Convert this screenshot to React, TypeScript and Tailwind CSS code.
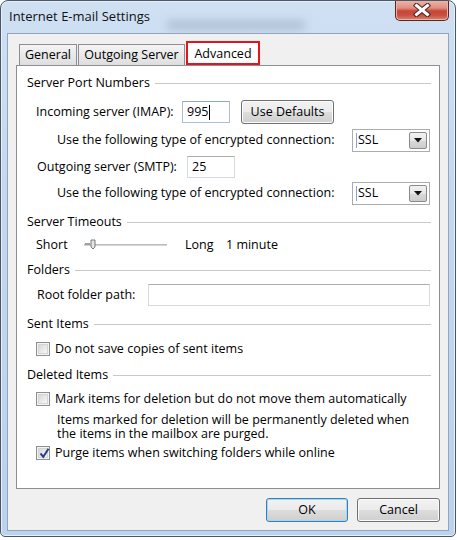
import React from "react";

function GroupHeader({ title, className = "" }: { title: string; className?: string }) {
  return (
    <div className={`flex items-center h-[14px] pl-[10px] ${className}`}>
      <span className="whitespace-nowrap">{title}</span>
      <div className="flex-1 ml-[5px] h-0 border-t border-[#c8c8c8]" />
    </div>
  );
}

function TextBox({ value, width, focused = false, caret = false }: { value: string; width: string; focused?: boolean; caret?: boolean }) {
  return (
    <div
      className={`${width} h-[22px] bg-white flex items-center pl-[4px] border ${
        focused
          ? "border-[#a9bfd8] border-t-[#8fa8c6]"
          : "border-[#d6d9df] border-t-[#abadb3]"
      }`}
    >
      <span>{value}</span>
      {caret && <span className="w-px h-[15px] bg-black ml-[1px]" />}
    </div>
  );
}

function Select({ value }: { value: string }) {
  return (
    <div className="w-[78px] h-[23px] bg-white border border-[#acacac] flex items-center pl-[3px] pr-[2px]">
      <span className="w-px h-[15px] bg-[#7aa7d8] mr-[1px]" />
      <span className="flex-1">{value}</span>
      <div className="w-[18px] h-[17px] border border-[#8a8a8a] rounded-[2px] bg-[linear-gradient(to_bottom,#f2f2f2_0%,#e6e6e6_50%,#d8d8d8_51%,#cdcdcd_100%)] flex items-center justify-center">
        <svg width="8" height="5" viewBox="0 0 8 5">
          <path d="M0 0 L8 0 L4 4.5 Z" fill="#111" />
        </svg>
      </div>
    </div>
  );
}

function CheckBox({ checked = false }: { checked?: boolean }) {
  return (
    <div className="w-[14px] h-[14px] border border-[#8e8f8f] bg-[#f4f4f4] p-[1px] shrink-0">
      <div className="relative w-full h-full border border-[#d4d4d4] bg-[linear-gradient(135deg,#d6d8db_0%,#ebebeb_60%,#f7f7f7_100%)]">
        {checked && (
          <svg className="absolute left-[0px] top-[-1px]" width="11" height="11" viewBox="0 0 11 11">
            <path d="M1.5 5.5 L4.3 8.8 L9.5 0.8" fill="none" stroke="#2a3f7e" strokeWidth="2" />
          </svg>
        )}
      </div>
    </div>
  );
}

function Button({ label, width, isDefault = false }: { label: string; width: string; isDefault?: boolean }) {
  return (
    <div
      className={`${width} h-[24px] rounded-[3px] border flex items-center justify-center bg-[linear-gradient(to_bottom,#f2f2f2_0%,#ebebeb_48%,#dddddd_50%,#cfcfcf_100%)] ${
        isDefault
          ? "border-[#3c7fb1] shadow-[inset_0_0_0_1px_#9fd9f6]"
          : "border-[#707070] shadow-[inset_0_0_0_1px_#fbfbfb]"
      }`}
    >
      {label}
    </div>
  );
}

function Slider() {
  return (
    <svg width="83" height="16" viewBox="0 0 83 16">
      <rect x="0" y="7" width="83" height="2" fill="#d4d4d4" />
      <rect x="0" y="7" width="83" height="1" fill="#bdbdbd" />
      <rect x="1" y="6" width="5" height="2" fill="#a0a0a0" />
      <path d="M7 3 L11 3 L11 10 L9 12 L7 10 Z" fill="#e6e6e6" stroke="#7b7b7b" strokeWidth="1" />
    </svg>
  );
}

function CloseButton() {
  return (
    <div className="w-[54px] h-[21px] mr-[6px] mt-[-1px] rounded-b-[5px] border border-[#5a2620] border-t-0 bg-[linear-gradient(to_bottom,#ecb8ab_0%,#df8f7f_40%,#c5473a_55%,#c94e40_75%,#d98372_100%)] shadow-[inset_0_0_0_1px_#efb3a6] flex items-center justify-center">
      <svg width="18" height="14" viewBox="0 0 18 14">
        <path d="M3.5 2.5 L14.5 11.5 M14.5 2.5 L3.5 11.5" stroke="#4b2320" strokeWidth="5" strokeLinecap="square" />
        <path d="M3.5 2.5 L14.5 11.5 M14.5 2.5 L3.5 11.5" stroke="#ffffff" strokeWidth="3" strokeLinecap="square" />
      </svg>
    </div>
  );
}

export default function App() {
  return (
    <div className="w-[457px] h-[540px] bg-white font-['Open_Sans',sans-serif] text-[12.5px] leading-none text-black">
      <div className="relative w-[456px] h-[537px] rounded-t-[8px] rounded-b-[5px] border border-[#4b5667] bg-[linear-gradient(to_bottom,#cfe0f3_0%,#c3d7ef_40%,#bcd2ed_100%)] shadow-[inset_0_0_0_1px_#e6eff9] flex flex-col overflow-hidden">
        <div className="absolute left-[165px] top-[19px] w-[140px] h-[10px] rounded-full bg-[#8797ab] opacity-40 blur-[4px]" />
        {/* Title bar */}
        <div className="relative h-[32px] flex items-start justify-between">
          <div className="h-[31px] flex items-center pl-[8px] text-[13px] text-[#111]">Internet E-mail Settings</div>
          <CloseButton />
        </div>
        {/* Client */}
        <div className="relative mx-[6px] h-[498px] border border-[#8fa5c2] bg-[#f0f0f0] flex flex-col">
          {/* Tabs */}
          <div className="h-[24px] mt-[7px] pl-[11px] flex items-end gap-[1px]">
            <div className="w-[58px] h-[21px] border border-b-0 border-[#8c8e94] bg-[linear-gradient(to_bottom,#f4f4f4_0%,#e9e9e9_50%,#dedede_100%)] flex items-center justify-center">
              General
            </div>
            <div className="w-[107px] h-[21px] border border-b-0 border-[#8c8e94] bg-[linear-gradient(to_bottom,#f4f4f4_0%,#e9e9e9_50%,#dedede_100%)] flex items-center justify-center">
              Outgoing Server
            </div>
            <div className="w-[74px] h-[24px] border-2 border-[#e3141a] bg-white flex items-center justify-center pt-[3px]">
              Advanced
            </div>
          </div>
          {/* Panel */}
          <div className="mx-[8px] h-[424px] border border-[#8c8e94] bg-white pt-[10px] pr-[8px] flex flex-col">
            <GroupHeader title="Server Port Numbers" />
            <div className="mt-[10px] h-[24px] pl-[19px] flex items-center">
              <span className="w-[146px]">Incoming server (IMAP):</span>
              <TextBox value="995" width="w-[48px]" focused caret />
              <div className="ml-[11px]">
                <Button label="Use Defaults" width="w-[93px]" />
              </div>
            </div>
            <div className="mt-[5px] h-[22px] pl-[40px] pr-[1px] flex items-center">
              <span className="flex-1 whitespace-nowrap">Use the following type of encrypted connection:</span>
              <Select value="SSL" />
            </div>
            <div className="mt-[5px] h-[22px] pl-[20px] flex items-center">
              <span className="w-[150px]">Outgoing server (SMTP):</span>
              <TextBox value="25" width="w-[48px]" />
            </div>
            <div className="mt-[4px] h-[22px] pl-[40px] pr-[1px] flex items-center">
              <span className="flex-1 whitespace-nowrap">Use the following type of encrypted connection:</span>
              <Select value="SSL" />
            </div>

            <GroupHeader title="Server Timeouts" className="mt-[11px]" />
            <div className="mt-[8px] h-[16px] pl-[19px] flex items-center">
              <span className="w-[48px]">Short</span>
              <Slider />
              <span className="ml-[18px] w-[41px]">Long</span>
              <span>1 minute</span>
            </div>

            <GroupHeader title="Folders" className="mt-[10px]" />
            <div className="mt-[7px] h-[22px] pl-[20px] pr-[1px] flex items-center">
              <span className="w-[111px]">Root folder path:</span>
              <div className="flex-1">
                <TextBox value="" width="w-full" />
              </div>
            </div>

            <GroupHeader title="Sent Items" className="mt-[11px]" />
            <div className="mt-[11px] h-[14px] pl-[19px] flex items-center gap-[5px]">
              <CheckBox />
              <span>Do not save copies of sent items</span>
            </div>

            <GroupHeader title="Deleted Items" className="mt-[12px]" />
            <div className="mt-[10px] h-[14px] pl-[19px] flex items-center gap-[5px]">
              <CheckBox />
              <span className="whitespace-nowrap">Mark items for deletion but do not move them automatically</span>
            </div>
            <div className="mt-[7px] ml-[40px] w-[362px] h-[28px] leading-[14px]">
              Items marked for deletion will be permanently deleted when the items in the mailbox are purged.
            </div>
            <div className="mt-[5px] h-[14px] pl-[19px] flex items-center gap-[5px]">
              <CheckBox checked />
              <span className="whitespace-nowrap">Purge items when switching folders while online</span>
            </div>
          </div>
          {/* Buttons */}
          <div className="mt-[9px] pr-[8px] flex justify-end gap-[9px]">
            <Button label="OK" width="w-[82px]" isDefault />
            <Button label="Cancel" width="w-[83px]" />
          </div>
        </div>
      </div>
    </div>
  );
}
